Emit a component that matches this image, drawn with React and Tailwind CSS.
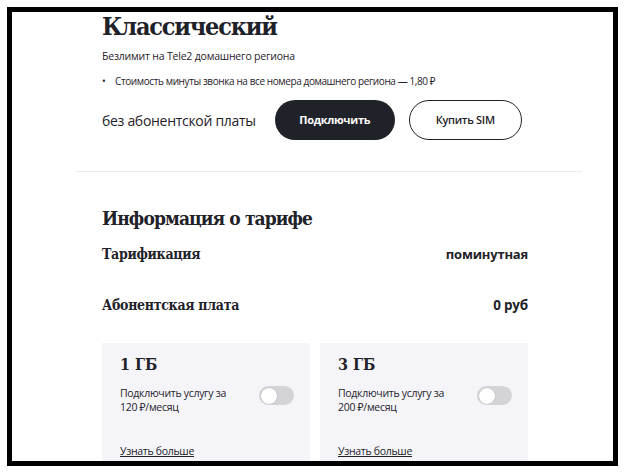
export default function App() {
  const sans = { fontFamily: '"Open Sans", "Noto Sans", sans-serif' };
  const serif = { fontFamily: '"DejaVu Serif Condensed", "DejaVu Serif", serif', fontStretch: 'condensed' };
  return (
    <div className="w-[625px] h-[473px] bg-white overflow-hidden">
      <div className="ml-[7px] mt-[7px] w-[611px] h-[459px] border-[5px] border-black overflow-hidden bg-white text-[#1f2229]">
        <div className="pl-[90px] pr-[85px]">
          <h1 className="text-[25px] leading-[30px] font-bold tracking-[-1.2px]" style={serif}>Классический</h1>
          <p className="mt-[7px] text-[10.5px] leading-[15px] tracking-[-0.2px]" style={sans}>Безлимит на Tele2 домашнего региона</p>
          <div className="mt-[10px] flex items-center text-[10px] leading-[15px] tracking-[-0.4px]" style={sans}>
            <span className="w-[13px] text-[10px]">•</span>
            <span>Стоимость минуты звонка на все номера домашнего региона — 1,80 ₽</span>
          </div>
          <div className="mt-[11px] flex items-center">
            <span className="whitespace-nowrap text-[14px] tracking-[-0.3px]" style={sans}>без абонентской платы</span>
            <button className="ml-[19px] w-[120px] h-[40px] rounded-full bg-[#1f2229] text-white text-[11px] font-bold tracking-[-0.3px]" style={sans}>Подключить</button>
            <button className="ml-[14px] w-[113px] h-[40px] rounded-full border-[1.5px] border-[#1f2229] bg-white text-[11px] font-semibold tracking-[-0.3px]" style={sans}>Купить SIM</button>
          </div>
        </div>
        <div className="mt-[31px] ml-[63px] mr-[31px] h-px bg-[#ececec]"></div>
        <div className="pl-[90px] pr-[85px]">
          <h2 className="mt-[34px] text-[19px] leading-[24px] font-bold tracking-[-0.9px]" style={serif}>Информация о тарифе</h2>
          <div className="mt-[14px] flex items-center justify-between">
            <span className="text-[14px] font-bold tracking-[-0.3px]" style={serif}>Тарификация</span>
            <span className="text-[13px] font-bold tracking-[-0.2px]" style={sans}>поминутная</span>
          </div>
          <div className="mt-[30px] flex items-center justify-between">
            <span className="text-[14px] font-bold tracking-[-0.3px]" style={serif}>Абонентская плата</span>
            <span className="text-[13.5px] font-bold tracking-[-0.2px]" style={sans}>0 руб</span>
          </div>
          <div className="mt-[27px] grid grid-cols-2 gap-[10px]">
            {[
              ["1 ГБ", "120"],
              ["3 ГБ", "200"],
            ].map(([t, p]) => (
              <div key={t} className="bg-[#f5f5f9] h-[140px] pl-[18px] pr-[16px] pt-[12px]">
                <div className="text-[16px] leading-[20px] font-bold" style={serif}>{t}</div>
                <div className="mt-[11px] flex items-start justify-between">
                  <div className="text-[10.5px] leading-[14px] tracking-[-0.3px]" style={sans}>
                    Подключить услугу за<br />{p} ₽/месяц
                  </div>
                  <div className="w-[35px] h-[19px] rounded-full bg-[#d4d4d8] flex items-center pl-[1.5px]">
                    <div className="w-[16px] h-[16px] rounded-full bg-white shadow-[0_0_1px_rgba(0,0,0,0.3)]"></div>
                  </div>
                </div>
                <a className="block mt-[30px] text-[10.5px] leading-[14px] underline tracking-[-0.3px]" style={sans}>Узнать больше</a>
              </div>
            ))}
          </div>
        </div>
      </div>
    </div>
  );
}
